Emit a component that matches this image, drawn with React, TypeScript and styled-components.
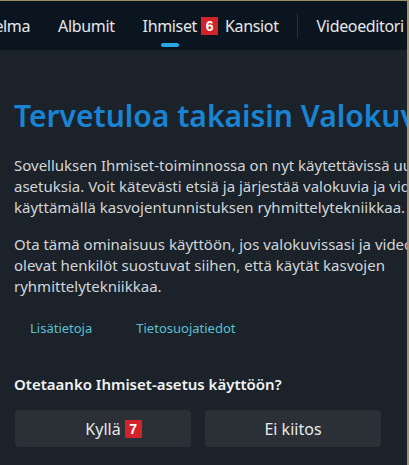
import styled, { createGlobalStyle } from "styled-components";

const GlobalStyle = createGlobalStyle`
    html, body {
        margin: 0;
        padding: 0;
        background: #1b222a;
    }
    body {
        font-family: "Noto Sans", "Open Sans", sans-serif;
    }
`;

const navItems = [
    { label: "Kokoelma" },
    { label: "Albumit" },
    { label: "Ihmiset", badge: "6", active: true },
    { label: "Kansiot" },
];

export default function App() {
    return (
        <>
            <GlobalStyle />
            <FrameStyled>
                <TopBarStyled>
                    <NavRowStyled>
                        {navItems.map((item) => (
                            <NavItemStyled key={item.label} $active={item.active}>
                                <LabelStyled>
                                    {item.label}
                                    {item.badge && <BadgeStyled>{item.badge}</BadgeStyled>}
                                </LabelStyled>
                            </NavItemStyled>
                        ))}
                        <SeparatorStyled />
                        <NavItemStyled>Videoeditori</NavItemStyled>
                    </NavRowStyled>
                </TopBarStyled>
                <ContentStyled>
                    <HeadingStyled>Tervetuloa takaisin Valokuviin</HeadingStyled>
                    <TextStyled>
                        Sovelluksen Ihmiset-toiminnossa on nyt käytettävissä uusia<br />
                        asetuksia. Voit kätevästi etsiä ja järjestää valokuvia ja videoita<br />
                        käyttämällä kasvojentunnistuksen ryhmittelytekniikkaa.
                    </TextStyled>
                    <TextStyled>
                        Ota tämä ominaisuus käyttöön, jos valokuvissasi ja videoissasi<br />
                        olevat henkilöt suostuvat siihen, että käytät kasvojen<br />
                        ryhmittelytekniikkaa.
                    </TextStyled>
                    <LinksRowStyled>
                        <LinkStyled>Lisätietoja</LinkStyled>
                        <LinkStyled>Tietosuojatiedot</LinkStyled>
                    </LinksRowStyled>
                    <QuestionStyled>Otetaanko Ihmiset-asetus käyttöön?</QuestionStyled>
                    <ButtonRowStyled>
                        <ButtonStyled>
                            <LabelStyled>
                                Kyllä<BadgeStyled>7</BadgeStyled>
                            </LabelStyled>
                        </ButtonStyled>
                        <ButtonStyled>Ei kiitos</ButtonStyled>
                    </ButtonRowStyled>
                </ContentStyled>
            </FrameStyled>
        </>
    );
}

// [== STYLES ==]
const FrameStyled = styled.div`
    width: 409px;
    height: 465px;
    box-sizing: border-box;
    overflow: hidden;
    border-top: 1px solid #9c8f68;
    border-right: 2px solid #a3956c;
    background: #1b222a;
    display: flex;
    flex-direction: column;
`;

const TopBarStyled = styled.div`
    height: 49px;
    flex-shrink: 0;
    background: #0b1520;
    overflow: hidden;
`;

const NavRowStyled = styled.div`
    display: flex;
    align-items: center;
    height: 100%;
    margin-left: -42px;
    gap: 28px;
    white-space: nowrap;
`;

const NavItemStyled = styled.div<{ $active?: boolean }>`
    position: relative;
    display: flex;
    align-items: center;
    height: 100%;
    font-size: 16px;
    letter-spacing: -0.35px;
    color: #e6e8ea;
    ${({ $active }) => $active && `
        &::after {
            content: "";
            position: absolute;
            left: 50%;
            margin-left: -9px;
            bottom: 3px;
            width: 18px;
            height: 4px;
            border-radius: 2px;
            background: #2ba6e6;
        }
    `}
`;

const LabelStyled = styled.span`
    position: relative;
`;

const BadgeStyled = styled.span`
    position: absolute;
    left: calc(100% + 4px);
    top: 50%;
    transform: translateY(-50%);
    display: flex;
    align-items: center;
    justify-content: center;
    width: 17px;
    height: 18px;
    background: #d2232b;
    color: #ffffff;
    font-family: "Liberation Sans", Arial, sans-serif;
    font-weight: 700;
    font-size: 14px;
    letter-spacing: 0;
`;

const SeparatorStyled = styled.div`
    width: 1px;
    height: 24px;
    background: #2a333d;
    margin: 0 -9px 0 -10px;
`;

const ContentStyled = styled.div`
    flex: 1;
    padding: 46px 0 0 14px;
    white-space: nowrap;
`;

const HeadingStyled = styled.h1`
    margin: 0 0 19px 0;
    font-size: 30px;
    font-weight: 600;
    line-height: 40px;
    color: #1a84d4;
`;

const TextStyled = styled.p`
    margin: 0 0 16px 0;
    font-size: 15px;
    line-height: 21px;
    color: #d3d6d9;
`;

const LinksRowStyled = styled.div`
    display: flex;
    gap: 44px;
    padding-left: 16px;
    margin-top: 22px;
`;

const LinkStyled = styled.span`
    font-size: 13px;
    color: #5cc0d4;
`;

const QuestionStyled = styled.div`
    margin-top: 37px;
    font-size: 15px;
    font-weight: 600;
    color: #f2f3f4;
`;

const ButtonRowStyled = styled.div`
    display: flex;
    gap: 14px;
    margin-top: 16px;
    padding-left: 1px;
`;

const ButtonStyled = styled.div`
    width: 176px;
    height: 37px;
    display: flex;
    align-items: center;
    justify-content: center;
    background: #2b3037;
    border-radius: 4px;
    font-size: 16px;
    color: #e8e9ea;
`;
